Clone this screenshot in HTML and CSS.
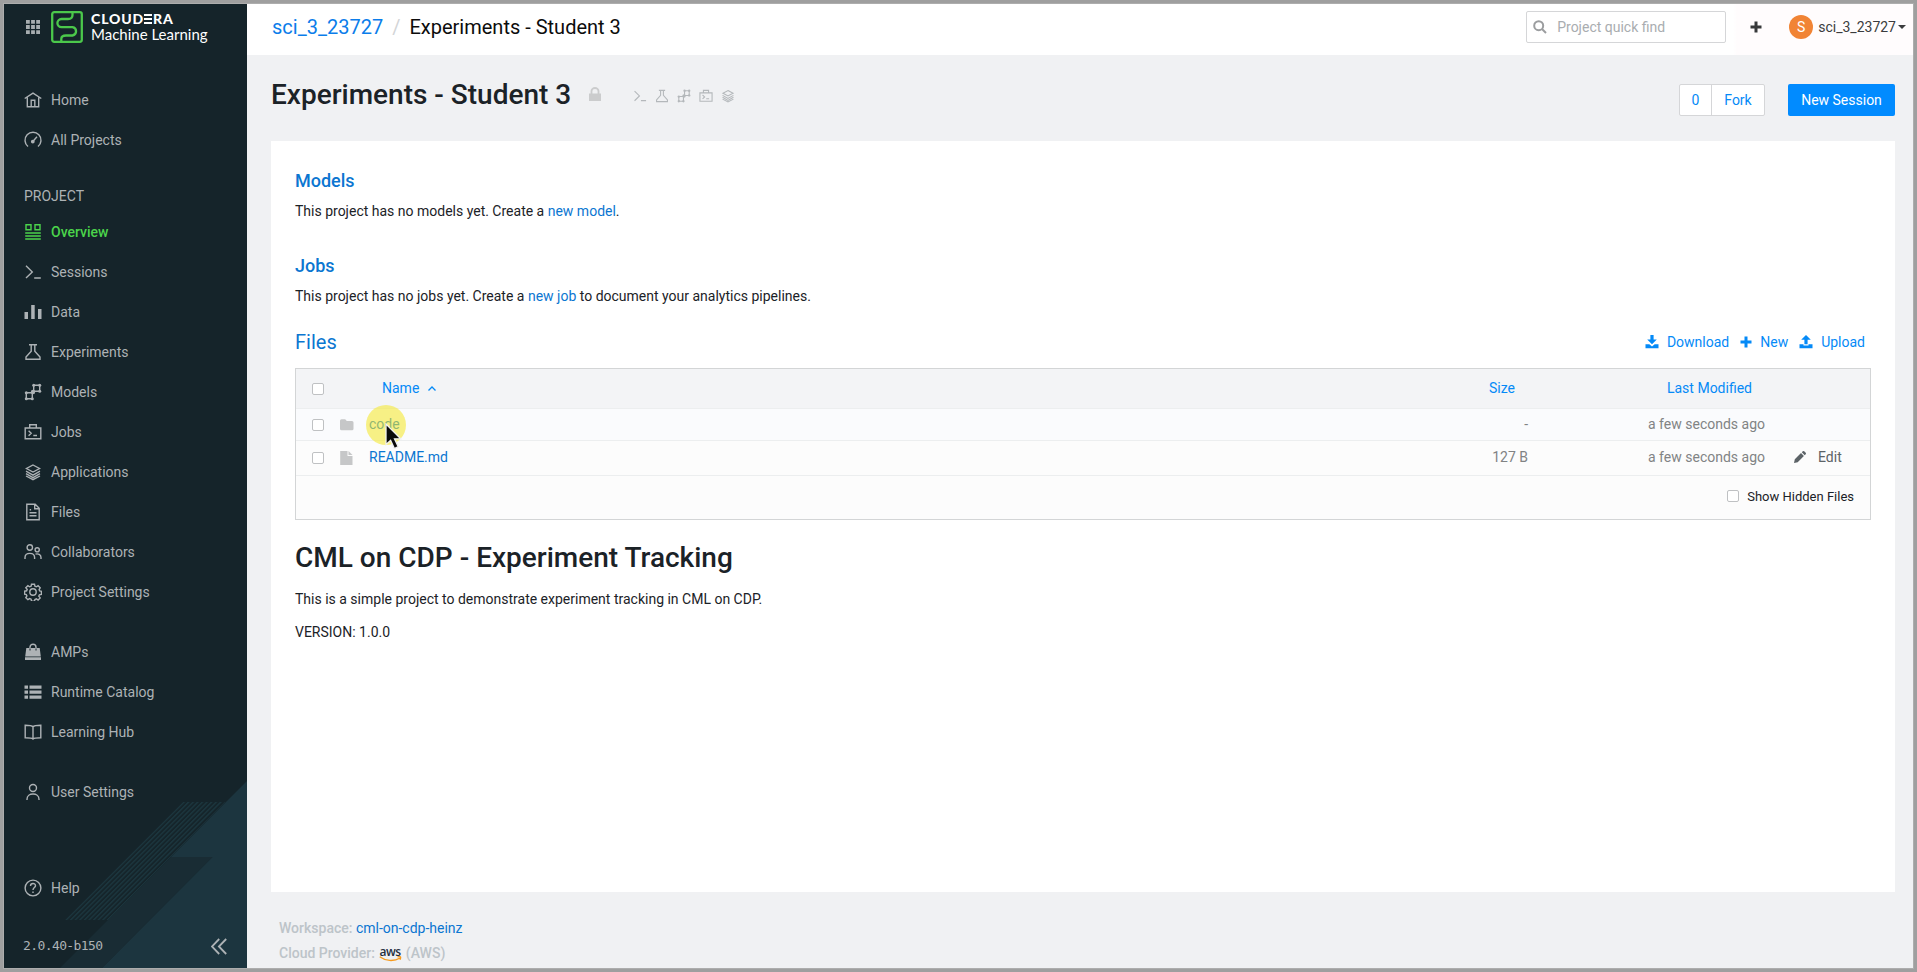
FILE: index.html
```html
<!DOCTYPE html>
<html lang="en">
<head>
<meta charset="utf-8">
<title>Experiments - Student 3</title>
<link rel="stylesheet" href="styles.css">
</head>
<body>
<svg class="defs" width="0" height="0" aria-hidden="true">
  <symbol id="i-home" viewBox="0 0 18 18"><path d="M.7 7.500 9 2.200l8.300 5.300M3.300 6.500v9.200h11.400V6.500M7.200 15.500V9.300h3.600v6.200"/></symbol>
  <symbol id="i-gauge" viewBox="0 0 18 18"><path d="M4 15.500A8 8 0 1 1 14 15.500M8.800 10.500l4.200-4.700"/><circle cx="8.800" cy="10.600" r="1.200" fill="currentColor"/></symbol>
  <symbol id="i-overview" viewBox="0 0 18 18"><path d="M2 1.800h5v5H2zM11 1.800h5v5h-5zM1.200 10h15.600M1.200 13h15.600M1.200 16h15.600"/></symbol>
  <symbol id="i-sessions" viewBox="0 0 18 18"><path d="m2 2.700 6.300 6.200L2 15.100M10.200 15h6.600"/></symbol>
  <symbol id="i-data" viewBox="0 0 18 18"><path fill="currentColor" stroke="none" d="M.5 9H4v7H.5zM7.200 2h3.500v14H7.200zM14 6h3.500v10H14z"/></symbol>
  <symbol id="i-flask" viewBox="0 0 18 18"><path d="M5 1.800h8M7.200 2v6.200L2 14v2.200h14V14l-5.200-5.800V2"/></symbol>
  <symbol id="i-models" viewBox="0 0 18 18"><path d="M9.700 2.300h6v6h-6zM2.300 9.700h6v6h-6z"/><g fill="currentColor" stroke="none"><circle cx="9.700" cy="2.300" r="1.500"/><circle cx="15.700" cy="2.300" r="1.500"/><circle cx="15.700" cy="8.300" r="1.500"/><circle cx="2.300" cy="9.700" r="1.500"/><circle cx="2.300" cy="15.700" r="1.500"/><circle cx="8.300" cy="15.700" r="1.500"/><circle cx="9" cy="9" r="2.200"/></g></symbol>
  <symbol id="i-jobs" viewBox="0 0 18 18"><path d="M1.200 5h15.600v10.700H1.200zM5.700 5V1.800h6.600V5M4.600 7.700l2.600 2.500-2.600 2.500M9.300 12.500H13"/></symbol>
  <symbol id="i-apps" viewBox="0 0 18 18"><path d="m9 2 6.500 3.500L9 9 2.500 5.500zM2 8.200l7 3.900 7-3.900M2 10.700l7 3.900 7-3.900M2 13l7 3.700L16 13"/></symbol>
  <symbol id="i-files" viewBox="0 0 18 18"><path d="M2.800 1.200h8.400l4 4v11.600H2.800zM10.700 1.500v4.200h4.200M5.700 6.700h1.400M5.500 9.700h7M5.500 12.700h7"/></symbol>
  <symbol id="i-collab" viewBox="0 0 18 18"><circle cx="5.800" cy="4.500" r="2.700"/><circle cx="13.200" cy="6.800" r="2.100"/><path d="M1 16v-1.500c0-5.500 9.600-5.500 9.600 0V16M11.500 11.200c2.600-.9 5.500.5 5.500 3.400V16"/></symbol>
  <symbol id="i-gear" viewBox="0 0 18 18"><circle cx="9" cy="9" r="3.200"/><path d="M7.500 1.200h3l.4 2 1.500.6 1.700-1.100 2.100 2.100-1.100 1.700.6 1.500 1.700.4v3l-2 .4-.6 1.300 1.400 1.800-2.100 2.100-1.700-1.100-1.500.6-.4 1.700h-3l-.4-2-1.500-.6-1.700 1.100-2.100-2.100 1.100-1.700-.6-1.300-1.700-.4v-3l2-.4.600-1.500-1.400-1.500 2.100-2.100 1.700 1.100 1.500-.6z"/></symbol>
  <symbol id="i-amps" viewBox="0 0 18 18"><path fill="currentColor" stroke="none" d="M2.300 5h13.400l1.100 8.500H1.200zM1 14.200h16v2.800H1z"/><path d="M6 5V4.200a3 3 0 0 1 6 0V5"/><path stroke="#15242a" stroke-width="1" d="M6 5.500v2M12 5.500v2"/></symbol>
  <symbol id="i-list" viewBox="0 0 18 18"><path fill="currentColor" stroke="none" d="M.5 2.500H4v3.300H.5zM5.500 2.500h12v3.300h-12zM.5 7.500H4v3.300H.5zM5.500 7.500h12v3.300h-12zM.5 12.500H4v3.300H.5zM5.500 12.500h12v3.300h-12z"/></symbol>
  <symbol id="i-book" viewBox="0 0 18 18"><path d="M9 3.800C8 2.500 6.500 2.300 1.200 2.300v12.400c5.300 0 6.800.2 7.800 1.300 1-1.100 2.500-1.300 7.800-1.300V2.300C11.500 2.300 10 2.500 9 3.800zV16"/></symbol>
  <symbol id="i-user" viewBox="0 0 18 18"><circle cx="9" cy="5" r="3.500"/><path d="M3 17v-.8c0-6.900 12-6.900 12 0v.8"/></symbol>
  <symbol id="i-help" viewBox="0 0 18 18"><circle cx="9" cy="9" r="7.900"/><path d="M6.500 7c0-3.300 5-3.200 5-.3C11.500 8.500 9 8.700 9 11M9 12.500v1.500"/></symbol>
  <symbol id="i-plus" viewBox="0 0 12 12"><path fill="currentColor" stroke="none" d="M4.500.5h3v4h4v3h-4v4h-3v-4h-4v-3h4z"/></symbol>
  <symbol id="i-download" viewBox="0 0 14 14"><path fill="currentColor" stroke="none" d="M5.400 0h3.200v4.500h3.200L7 9.300 2.200 4.500h3.200zM.5 9.200h3.800L7 11.500l2.700-2.300h3.800v4H.5z"/></symbol>
  <symbol id="i-upload" viewBox="0 0 14 14"><path fill="currentColor" stroke="none" d="M5.400 9.300V4.800H2.200L7 0l4.800 4.800H8.600v4.500zM.5 9.200h4v1.300h5V9.200h4v4H.5z"/></symbol>
</svg>

<div class="window">
  <aside class="sidebar">
    <svg class="deco" viewBox="0 0 243 187" aria-hidden="true">
      <defs><pattern id="hatch" width="4.600" height="118" patternUnits="userSpaceOnUse" patternTransform="translate(179 21) skewX(-45)"><rect width="2.200" height="118" fill="#1b353d"/></pattern></defs>
      <path fill="#1c353f" d="M243 0 167 76h41.500L98 187h145z"/>
      <path fill="#192c34" d="M167 76h41.500L98 187H56z"/>
      <path fill="url(#hatch)" d="M179 21h42L104 139H61z"/>
    </svg>
    <header class="brand">
      <svg class="waffle" viewBox="0 0 14 14"><path d="M0 0h3.800v3.800H0zM5.100 0h3.800v3.800H5.100zM10.200 0H14v3.800h-3.800zM0 5.100h3.800v3.800H0zM5.100 5.100h3.800v3.800H5.100zM10.200 5.100H14v3.800h-3.800zM0 10.200h3.800V14H0zM5.100 10.200h3.800V14H5.100zM10.200 10.200H14V14h-3.800z"/></svg>
      <svg class="logo" viewBox="0 0 32 32"><rect x="1.200" y="1.200" width="29.600" height="29.600" rx="2"/><path d="M21.500 1v3c0 3-2 4-4.500 4h-6.500a4 4 0 0 0 0 8.200h11a4.200 4.200 0 0 1 0 8.300h-6.500c-3 0-4.700 1.200-4.700 3.500v3"/></svg>
      <div class="brand-text">
        <div class="brand-name">CLOUD<span class="brand-e">E</span>RA</div>
        <div class="brand-product">Machine Learning</div>
      </div>
    </header>
    <nav class="nav">
      <a class="item"><svg><use href="#i-home"/></svg>Home</a>
      <a class="item"><svg><use href="#i-gauge"/></svg>All Projects</a>
      <div class="label">PROJECT</div>
      <a class="item active"><svg><use href="#i-overview"/></svg>Overview</a>
      <a class="item"><svg><use href="#i-sessions"/></svg>Sessions</a>
      <a class="item"><svg><use href="#i-data"/></svg>Data</a>
      <a class="item"><svg><use href="#i-flask"/></svg>Experiments</a>
      <a class="item"><svg><use href="#i-models"/></svg>Models</a>
      <a class="item"><svg><use href="#i-jobs"/></svg>Jobs</a>
      <a class="item"><svg><use href="#i-apps"/></svg>Applications</a>
      <a class="item"><svg><use href="#i-files"/></svg>Files</a>
      <a class="item"><svg><use href="#i-collab"/></svg>Collaborators</a>
      <a class="item"><svg><use href="#i-gear"/></svg>Project Settings</a>
      <a class="item group"><svg><use href="#i-amps"/></svg>AMPs</a>
      <a class="item"><svg><use href="#i-list"/></svg>Runtime Catalog</a>
      <a class="item"><svg><use href="#i-book"/></svg>Learning Hub</a>
      <a class="item group"><svg><use href="#i-user"/></svg>User Settings</a>
    </nav>
    <a class="item help"><svg><use href="#i-help"/></svg>Help</a>
    <div class="version"><span>2.0.40-b150</span><svg viewBox="0 0 16 16"><path d="M8.200.5.9 8l7.300 7.500M15.200.5 7.900 8l7.300 7.500"/></svg></div>
  </aside>

  <div class="page">
    <header class="topbar">
      <div class="crumbs"><a>sci_3_23727</a><span class="slash">/</span><span>Experiments - Student 3</span></div>
      <div class="search"><svg viewBox="0 0 14 14"><circle cx="5.700" cy="5.700" r="4.500"/><path d="m9 9 4 4"/></svg><span>Project quick find</span></div>
      <svg class="add"><use href="#i-plus"/></svg>
      <div class="user"><span class="avatar">S</span><span class="username">sci_3_23727</span><span class="caret"></span></div>
    </header>

    <main class="main">
      <div class="titlebar">
        <h1>Experiments - Student 3</h1>
        <svg class="lock" viewBox="0 0 12 14"><path fill="#cbcccd" d="M0 6.500h12V14H0z"/><path fill="none" stroke="#cbcccd" stroke-width="1.800" d="M2.500 7V4a3.500 3 0 0 1 7 0v3"/></svg>
        <div class="quick">
          <svg><use href="#i-sessions"/></svg><svg><use href="#i-flask"/></svg><svg><use href="#i-models"/></svg><svg><use href="#i-jobs"/></svg><svg><use href="#i-apps"/></svg>
        </div>
        <div class="fork"><span>0</span><span>Fork</span></div>
        <div class="new-session">New Session</div>
      </div>

      <section class="card">
        <h2>Models</h2>
        <p>This project has no models yet. Create a <a>new model</a>.</p>
        <h2 class="jobs">Jobs</h2>
        <p>This project has no jobs yet. Create a <a>new job</a> to document your analytics pipelines.</p>
        <div class="files-head">
          <h2 class="files">Files</h2>
          <a><svg><use href="#i-download"/></svg>Download</a>
          <a class="act-new"><svg><use href="#i-plus"/></svg>New</a>
          <a class="act-up"><svg><use href="#i-upload"/></svg>Upload</a>
        </div>
        <div class="table">
          <div class="row head">
            <i class="check"></i><span></span><span class="name">Name<svg viewBox="0 0 8 5"><path d="m.5 4.500 3.500-3.500 3.500 3.500"/></svg></span><span class="size">Size</span><span class="mod">Last Modified</span>
          </div>
          <div class="row code">
            <i class="check"></i>
            <svg class="ficon" viewBox="0 0 14 14"><path d="M1.500 1.200h3.700l1.600 1.900h5.200q1.500 0 1.500 1.500v6.200q0 1.500-1.500 1.500H1.500Q0 12.300 0 10.800V2.700q0-1.500 1.500-1.500z"/></svg>
            <span class="name"><a>code</a></span><span class="size">-</span><span class="mod">a few seconds ago</span>
            <i class="click-spot"></i>
            <svg class="pointer" viewBox="0 0 20 28"><path d="M2 1v20.500l4.600-4.200 3.800 8.200 3.800-1.800-3.700-7.900h6.200z"/></svg>
          </div>
          <div class="row readme">
            <i class="check"></i>
            <svg class="ficon" viewBox="0 0 14 14"><path d="M.2 0h7.300v5h5v9H.2zM8.500 0l4 4h-4z"/></svg>
            <span class="name"><a>README.md</a></span><span class="size">127 B</span><span class="mod">a few seconds ago</span>
            <span class="edit"><svg viewBox="0 0 12 12"><path d="M0 12l.8-3.700L7 2.100l2.900 2.900-6.200 6.200zM7.800 1.300l1-1q.7-.6 1.400 0l1.500 1.500q.6.700 0 1.400l-1 1z"/></svg>Edit</span>
          </div>
          <div class="row foot"><i class="check"></i><span>Show Hidden Files</span></div>
        </div>
        <h1 class="readme-title">CML on CDP - Experiment Tracking</h1>
        <p>This is a simple project to demonstrate experiment tracking in CML on CDP.</p>
        <p class="ver">VERSION: 1.0.0</p>
      </section>

      <footer class="footer">
        <div>Workspace: <a>cml-on-cdp-heinz</a></div>
        <div class="provider">Cloud Provider: <span class="aws">aws<svg viewBox="0 0 23 6"><path d="M.7.8c6 4.400 14 5 20.500 1.200M18.500.8c3-.6 4-.3 2.500 3"/></svg></span> (AWS)</div>
      </footer>
    </main>
  </div>
</div>
</body>
</html>
```

FILE: styles.css
```css
* { box-sizing: border-box; }
body { margin: 0; font: 14px/20px Roboto, "Liberation Sans", sans-serif; color: #1b2227; }
h1, h2, p { margin: 0; }
svg { fill: none; stroke: currentColor; flex: none; }
.defs { position: absolute; }

.window { width: 1917px; height: 972px; border: 3px solid #9f9f9f; display: flex; padding: 1px; background: #adadad; overflow: hidden; }

/* Sidebar */
.sidebar { position: relative; width: 243px; display: flex; flex-direction: column; background: #15242a; color: #adb2b5; }
.deco { position: absolute; left: 0; bottom: 0; width: 243px; height: 187px; stroke: none; }
.brand { height: 76px; display: flex; align-items: flex-start; padding: 7px 0 0 22px; }
.waffle { width: 14px; height: 14px; margin-top: 9px; fill: #a7adb0; stroke: none; }
.logo { width: 32px; height: 32px; margin-left: 11px; stroke: #4bc84b; stroke-width: 2.300px; }
.brand-text { margin-left: 8px; color: #fff; font-family: Lato, sans-serif; }
.brand-name { font-size: 14px; line-height: 16px; font-weight: 900; letter-spacing: .9px; white-space: nowrap; }
.brand-e { display: inline-block; height: 16px; line-height: 16px; vertical-align: top; color: transparent; background: linear-gradient(#fff 2px, transparent 2px 4px, #fff 4px 6px, transparent 6px 8px, #fff 8px) 0 3px / 8px 10px no-repeat; }
.brand-product { font-size: 15px; line-height: 15px; white-space: nowrap; }
.item { position: relative; display: flex; align-items: center; height: 40px; padding-left: 20px; gap: 9px; }
.item svg { width: 18px; height: 18px; stroke-width: 1.400px; }
.item.active { color: #4bd44b; font-weight: 500; }
.item.group { margin-top: 20px; }
.label { padding: 20px 0 0 20px; line-height: 32px; }
.help { margin-top: 56px; }
.version { position: relative; display: flex; justify-content: space-between; align-items: center; margin-top: 28px; padding: 0 20px 0 19px; font: 13px/20px "DejaVu Sans Mono", monospace; letter-spacing: -.6px; }
.version svg { width: 16px; height: 17px; stroke-width: 1.800px; }

/* Top bar */
.page { flex: 1; display: flex; flex-direction: column; background: #f0f1f3; }
.topbar { height: 51px; background: linear-gradient(90deg, #fff 1486px, #fffcfd 1490px); display: flex; align-items: center; padding: 0 7px 5px 25px; }
.crumbs { flex: 1; font-size: 20px; line-height: 24px; color: #0c0c0c; white-space: nowrap; }
.crumbs a { color: #0b7dea; }
.slash { color: #d3d5d7; margin: 0 9px; }
.search { width: 200px; height: 32px; border: 1px solid #d5d6d8; border-radius: 2px; display: flex; align-items: center; padding-left: 6px; gap: 10px; color: #a9adb0; background: #fff; }
.search svg { width: 14px; height: 14px; stroke-width: 2px; color: #9b9d9f; }
.add { width: 12px; height: 12px; margin-left: 24px; color: #37383a; }
.user { display: flex; align-items: center; margin-left: 27px; color: #3b3c3e; }
.avatar { width: 24px; height: 24px; border-radius: 50%; background: #f18435; color: #fff; text-align: center; line-height: 24px; margin-right: 5px; }
.caret { border: 4px solid transparent; border-top-color: #3b3c3e; border-bottom: 0; margin-left: 2px; }

/* Title row */
.main { padding: 28px 18px 0 24px; }
.titlebar { display: flex; align-items: flex-start; height: 58px; }
h1 { font-size: 28px; line-height: 24px; font-weight: 500; white-space: nowrap; }
.lock { width: 12px; height: 14px; margin: 4px 0 0 18px; stroke: none; }
.quick { display: flex; gap: 8px; margin: 6px 0 0 32px; color: #b4b8bb; flex: 1; }
.quick svg { width: 14px; height: 14px; stroke-width: 1.400px; }
.fork { display: flex; height: 32px; margin-top: 1px; border: 1px solid #d5d6d8; background: #fff; color: #058af7; line-height: 30px; text-align: center; border-radius: 2px; }
.fork span:first-child { width: 32px; border-right: 1px solid #d5d6d8; }
.fork span:last-child { width: 52px; }
.new-session { width: 107px; height: 32px; margin: 1px 0 0 23px; border-radius: 2px; background: #018bff; color: #fff; line-height: 32px; text-align: center; }

/* Content card */
.card { height: 751px; background: #fff; padding: 28px 24px 0; }
.card a, .footer a { color: #0b76d1; }
h2 { font-size: 18px; line-height: 24px; font-weight: 500; color: #0b76d1; }
h2 + p { margin-top: 8px; }
h2.jobs { margin-top: 33px; }
.files-head { display: flex; align-items: center; height: 24px; margin: 24px 6px 14px 0; }
h2.files { font-size: 20px; font-weight: 400; flex: 1; }
.files-head a { display: flex; align-items: center; gap: 8px; color: #058af7; }
.files-head svg { width: 14px; height: 14px; }
.files-head .act-new { margin-left: 11px; }
.files-head .act-new svg { width: 12px; height: 12px; }
.files-head .act-up { margin-left: 11px; }

/* File table */
.table { height: 152px; border: 1px solid #d3d5d6; background: #fcfcfc; }
.row { position: relative; display: grid; grid-template-columns: 28px 29px 760px 1fr 236px 105px; padding-left: 16px; align-items: center; border-bottom: 1px solid #eceeef; color: #818384; }
.row > span { margin-top: -2px; }
.row .size, .row .mod { text-align: right; }
.row .size { padding-right: 1px; }
.check { width: 12px; height: 12px; border: 1px solid #bfc1c3; border-radius: 2px; background: #fff; }
.head { height: 40px; background: #f3f4f6; color: #058af7; }
.head .name { padding-left: 13px; }
.head .name svg { width: 8px; height: 5px; margin-left: 9px; vertical-align: 2px; stroke-width: 1.300px; }
.row.head .size { padding-right: 14px; }
.head .mod { padding-right: 13px; }
.code { height: 32px; background: #fafbfd; }
.readme { height: 35px; }
.ficon { width: 14px; height: 14px; fill: #c6c7c8; stroke: none; }
.row .edit { display: flex; align-items: center; gap: 12px; padding-left: 29px; margin-top: -3px; color: #5c6367; }
.edit svg { width: 12px; height: 12px; fill: #5c6367; stroke: none; }
.foot { display: flex; justify-content: flex-end; gap: 8px; height: 43px; padding: 0 16px 0 0; border: 0; color: #1b2227; font-size: 13px; }
.foot .check { margin-top: -4px; }
.click-spot { position: absolute; left: 70px; top: -4px; width: 40px; height: 40px; border-radius: 50%; background: rgba(245, 231, 40, .56); z-index: 1; }
.pointer { position: absolute; left: 88px; top: 14px; width: 20px; height: 28px; fill: #0a0a0a; stroke: #f1f1f1; stroke-width: 1.300px; z-index: 2; }
.readme-title { margin: 26px 0 19px; line-height: 24px; }
.card .ver { margin-top: 13px; }

/* Footer */
.footer { padding: 26px 0 0 8px; font-weight: 500; color: #bdc4c9; line-height: 20px; }
.footer a { font-weight: 400; }
.provider { margin-top: 5px; }
.aws { position: relative; display: inline-block; width: 22px; margin: 0 1px; color: #252f3e; font: 600 12px/14px "Open Sans", sans-serif; letter-spacing: -.4px; vertical-align: 2px; }
.aws svg { position: absolute; left: 0; top: 11px; width: 23px; height: 6px; stroke: #f79a1c; stroke-width: 1.300px; }
```
